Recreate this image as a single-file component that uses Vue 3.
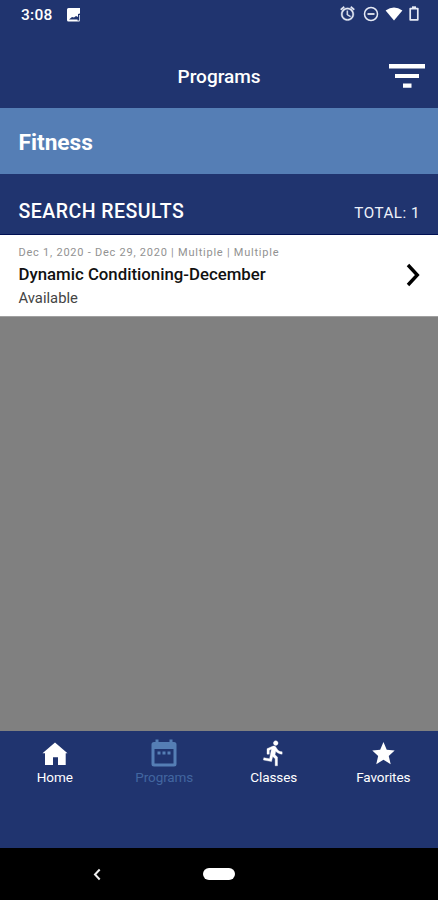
<script setup>
const tabs = [
  { name: 'Home', icon: 'home' },
  { name: 'Programs', icon: 'calendar', active: true },
  { name: 'Classes', icon: 'run' },
  { name: 'Favorites', icon: 'star' },
]
const results = [
  {
    meta: 'Dec 1, 2020 - Dec 29, 2020 | Multiple | Multiple',
    title: 'Dynamic Conditioning-December',
    status: 'Available',
  },
]
</script>

<template>
  <div class="screen">
    <div class="status">
      <span class="time">3:08</span>
      <svg class="photo" viewBox="0 0 14 14">
        <path fill="#fff" fill-rule="evenodd" d="M1.500 0H13v5.500l-2 .5v3l-2-1-2 1.500L5 9l-3 2.500h8.500V12.500h2v1H1.500Q0 13.500 0 12V1.500Q0 0 1.500 0z" />
        <path fill="#c5cde3" d="M12 7h1v6h-1z" />
      </svg>
      <div class="system">
        <svg class="alarm" viewBox="0 0 24 24"><path fill="#e6eaf5" stroke="#e6eaf5" stroke-width=".5" d="M22 5.720l-4.600-3.860-1.290 1.530 4.600 3.860L22 5.720zM7.880 3.390L6.600 1.860 2 5.710l1.290 1.530 4.590-3.850zM12.500 8H11v6l4.750 2.850.75-1.230-4-2.370V8zM12 4c-4.970 0-9 4.030-9 9s4.020 9 9 9c4.970 0 9-4.030 9-9s-4.030-9-9-9zm0 16c-3.870 0-7-3.130-7-7s3.130-7 7-7 7 3.130 7 7-3.130 7-7 7z" /></svg>
        <svg class="dnd" viewBox="0 0 16 16"><circle cx="8" cy="8" r="6.500" fill="none" stroke="#e6eaf5" stroke-width="1.500" /><path d="M4.500 8h7" stroke="#fff" stroke-width="1.600" /></svg>
        <svg class="wifi" viewBox="0 0 18 14"><path fill="#fff" d="M9 13.500L.6 3.600Q9-2.800 17.400 3.600z" /></svg>
        <svg class="battery" viewBox="0 0 10 15"><path fill="none" stroke="#e6eaf5" stroke-width="1.700" stroke-linejoin="round" d="M1.200 2.600h7.600v11.200H1.200z" /><path fill="#e6eaf5" d="M3 .3h4v2H3z" /></svg>
      </div>
    </div>

    <header class="bar">
      <h1>Programs</h1>
      <svg class="filter" viewBox="0 0 38 26"><path fill="#fff" d="M1 1h36v4.400H1zM7 11.100h24v3.900H7zM15 20.500h8.500v4.200H15z" /></svg>
    </header>

    <div class="category">Fitness</div>

    <div class="summary">
      <h2>SEARCH RESULTS</h2>
      <span class="total">TOTAL: {{ results.length }}</span>
    </div>

    <main>
      <article v-for="item in results" :key="item.title" class="card">
        <div>
          <p class="meta">{{ item.meta }}</p>
          <p class="title">{{ item.title }}</p>
          <p class="available">{{ item.status }}</p>
        </div>
        <svg class="chevron" viewBox="0 0 14 24"><path d="M2 2l9.300 10L2 22" fill="none" stroke="#000" stroke-width="3.400" /></svg>
      </article>
    </main>

    <nav>
      <div v-for="tab in tabs" :key="tab.name" class="tab" :class="{ active: tab.active }">
        <svg v-if="tab.icon === 'home'" viewBox="0 0 28 28"><path fill="currentColor" d="M14 3.500L26.500 14.200H24.700V26H17V18.300H12V26H4V14.200H1.500z" /></svg>
        <svg v-else-if="tab.icon === 'calendar'" viewBox="0 0 28 28"><path fill="currentColor" fill-rule="evenodd" d="M5.500 .5h3v2.500h11V.5h3v2.500H24Q26.500 3 26.500 5.500V25Q26.500 27.500 24 27.500H4Q1.500 27.500 1.500 25V5.500Q1.500 3 4 3h1.500zM4.500 10v14.500h19V10zM7.500 12.500h3v3h-3zM12.500 12.500h3v3h-3zM17.500 12.500h3v3h-3z" /></svg>
        <svg v-else-if="tab.icon === 'run'" viewBox="0 0 24 24"><path fill="currentColor" stroke="currentColor" stroke-width=".3" d="M13.490 5.480c1.100 0 2-.9 2-2s-.9-2-2-2-2 .9-2 2 .9 2 2 2zm-3.600 13.900l1-4.400 2.100 2v6h2v-7.500l-2.100-2 .6-3c1.300 1.500 3.300 2.500 5.500 2.500v-2c-1.900 0-3.500-1-4.300-2.400l-1-1.600c-.4-.6-1-1-1.700-1-.3 0-.5.1-.8.1l-5.200 2.200v4.700h2v-3.400l1.800-.7-1.600 8.100-4.900-1-.4 2 7 1.400z" /></svg>
        <svg v-else viewBox="0 0 24 24"><path fill="currentColor" transform="translate(.4 .6)" d="M12 17.270L18.180 21l-1.640-7.030L21.600 9.240l-6.790-.61L12 2 9.190 8.630 2.400 9.240l5.060 4.730L5.820 21z" /></svg>
        <span>{{ tab.name }}</span>
      </div>
    </nav>

    <footer class="system-nav">
      <svg class="back" viewBox="0 0 8 13"><path d="M6.700 1.500L2 6.500l4.700 5" fill="none" stroke="#eee" stroke-width="2" /></svg>
      <span class="pill"></span>
    </footer>
  </div>
</template>

<style>
body {
  margin: 0;
}
</style>

<style scoped>
.screen {
  width: 438px;
  height: 900px;
  display: flex;
  flex-direction: column;
  overflow: hidden;
  background: #20346f;
  color: #fff;
  font-family: Roboto, sans-serif;
}
h1, h2, p {
  margin: 0;
}
svg {
  display: block;
  flex: none;
}
.status {
  height: 29px;
  box-sizing: border-box;
  padding: 0 19px 0 21px;
  display: flex;
  align-items: center;
}
.time {
  font-size: 15.5px;
  font-weight: 500;
  width: 46px;
  letter-spacing: 0.3px;
}
.photo {
  width: 14px;
  height: 14px;
}
.system {
  margin-left: auto;
  padding-bottom: 2px;
  display: flex;
  align-items: center;
}
.alarm {
  width: 17px;
  height: 17px;
  margin-right: 7px;
}
.dnd {
  width: 16px;
  height: 16px;
  margin-right: 6px;
}
.wifi {
  width: 18px;
  height: 14px;
  margin-right: 6px;
}
.battery {
  width: 10px;
  height: 15px;
}
.bar {
  height: 78.5px;
  box-sizing: border-box;
  padding: 33px 12px 0 177.5px;
  display: flex;
  align-items: flex-start;
  justify-content: space-between;
}
h1 {
  font-size: 19px;
  line-height: 30px;
  font-weight: 500;
}
.filter {
  width: 38px;
  height: 26px;
  margin-top: 1px;
}
.category {
  height: 66.5px;
  padding-left: 18.5px;
  background: #557eb5;
  font-size: 22.7px;
  font-weight: 700;
  line-height: 70px;
}
.summary {
  height: 60.5px;
  box-sizing: border-box;
  padding: 14px 18px 0 18.5px;
  border-bottom: 1px solid #001053;
  display: flex;
  justify-content: space-between;
}
h2 {
  font-size: 19.5px;
  font-weight: 500;
  letter-spacing: 0.48px;
  line-height: 48px;
}
.total {
  font-size: 15.2px;
  letter-spacing: 0.5px;
  line-height: 50px;
  color: #eef1fa;
}
main {
  height: 496.5px;
  background: #808080;
}
.card {
  height: 82.5px;
  box-sizing: border-box;
  padding: 11px 18px 0 18.5px;
  border-bottom: 1px solid #a0a0a0;
  background: #fff;
  display: flex;
  justify-content: space-between;
}
.meta {
  font-size: 11px;
  line-height: 14px;
  letter-spacing: 0.76px;
  color: #929292;
}
.title {
  margin-top: 2px;
  font-size: 16.8px;
  font-weight: 500;
  line-height: 24px;
  color: #111;
}
.available {
  font-size: 14.8px;
  line-height: 24px;
  color: #444;
}
.chevron {
  width: 14px;
  height: 24px;
  margin-top: 17px;
}
nav {
  height: 117px;
  display: grid;
  grid-template-columns: repeat(4, 109.5px);
}
.tab {
  padding-top: 8px;
  display: flex;
  flex-direction: column;
  align-items: center;
  font-size: 13.5px;
  letter-spacing: -0.1px;
  line-height: 18px;
}
.tab svg {
  width: 28px;
  height: 28px;
}
.tab span {
  margin-top: 1px;
}
.active {
  color: #557eb5;
}
.active span {
  color: #4266a0;
}
.system-nav {
  height: 52px;
  padding-left: 93px;
  background: #000;
  display: flex;
  align-items: center;
}
.back {
  width: 8px;
  height: 13px;
}
.pill {
  width: 32px;
  height: 12px;
  margin-left: 102px;
  border-radius: 6px;
  background: #fff;
}
</style>
